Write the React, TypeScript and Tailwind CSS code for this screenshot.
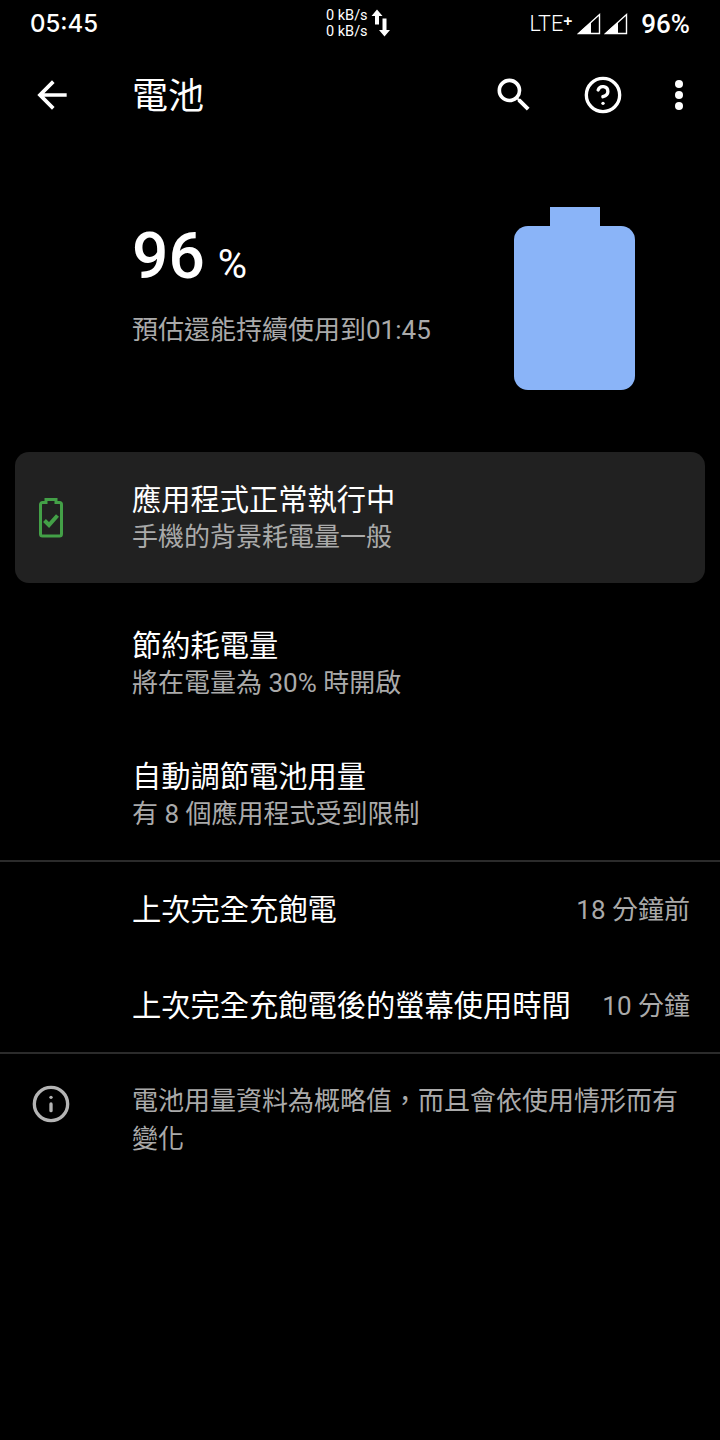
import { CircleHelp, Info } from 'lucide-react';

const cjk = "font-['Roboto','Noto_Sans_CJK_TC',sans-serif]";

function Signal() {
  return (
    <svg width="24" height="24" viewBox="0 0 24 24" className="text-white">
      <path d="M22.5 2.5V21.5H1.5Z" fill="none" stroke="currentColor" strokeWidth="1.4" />
      <path d="M13.5 11V21.5H1.5Z" fill="currentColor" stroke="currentColor" strokeWidth="1" />
    </svg>
  );
}

function StatusBar() {
  return (
    <div className="flex h-[48px] items-center pl-[30px] pr-[30px] text-white">
      <span className="w-[296px] text-[24px] font-medium font-['Inter','Roboto',sans-serif]">05:45</span>
      <div className="flex w-[100px] items-center">
        <div className="flex flex-col text-[14.5px] leading-[16px] font-['Roboto',sans-serif]">
          <span>0 kB/s</span>
          <span>0 kB/s</span>
        </div>
        <svg width="20" height="30" viewBox="0 0 20 30" className="ml-[3px]">
          <path d="M6 0.5L11.5 7H8V15.5H4V7H0.5Z" fill="white" />
          <path d="M13.5 27.5L8 21H11.5V9.5H15.5V21H19Z" fill="white" />
        </svg>
      </div>
      <div className="ml-auto flex items-center">
        <span className="text-[21.5px] font-['Roboto',sans-serif] font-light">LTE</span>
        <span className="mb-[6px] text-[16px] font-bold leading-none">+</span>
        <div className="ml-[5px] flex">
          <Signal />
          <span className="ml-[3px]"><Signal /></span>
        </div>
        <span className="ml-[13px] text-[26px] font-medium font-['Roboto',sans-serif]">96%</span>
      </div>
    </div>
  );
}

function Toolbar() {
  return (
    <div className="flex h-[94px] items-center text-white">
      <div className="flex w-[132px] pl-[30px]">
        <svg width="44" height="44" viewBox="0 0 24 24" fill="currentColor">
          <path d="M20 11H7.83l5.59-5.59L12 4l-8 8 8 8 1.41-1.41L7.83 13H20v-2z" />
        </svg>
      </div>
      <span className={`mt-[3px] text-[36px] leading-none ${cjk}`}>電池</span>
      <div className="ml-auto flex items-center pr-[37px]">
        <svg width="44" height="44" viewBox="0 0 24 24" fill="currentColor">
          <path d="M15.5 14h-.79l-.28-.27A6.471 6.471 0 0 0 16 9.5 6.5 6.5 0 1 0 9.5 16c1.61 0 3.09-.59 4.23-1.57l.27.28v.79l5 4.99L20.49 19l-4.99-5zm-6 0C7.01 14 5 11.99 5 9.5S7.01 5 9.5 5 14 7.01 14 9.5 11.99 14 9.5 14z" />
        </svg>
        <CircleHelp size={40} strokeWidth={2} className="ml-[47px]" />
        <div className="ml-[52px] flex flex-col gap-[3px]">
          <span className="size-[8px] rounded-full bg-white" />
          <span className="size-[8px] rounded-full bg-white" />
          <span className="size-[8px] rounded-full bg-white" />
        </div>
      </div>
    </div>
  );
}

function Hero() {
  return (
    <div className="flex h-[310px] pl-[132px] pr-[85px] pt-[65px]">
      <div className="flex-1 pt-[10px]">
        <div className="flex items-baseline text-white font-['Roboto',sans-serif]">
          <span className="text-[64px] font-medium leading-[80px]">96</span>
          <span className="ml-[13px] text-[40px] leading-none">%</span>
        </div>
        <p className={`mt-[16px] text-[26px] leading-[34px] text-[#aaaaaa] ${cjk}`}>預估還能持續使用到01:45</p>
      </div>
      <div className="flex flex-col items-center">
        <div className="h-[19px] w-[50px] bg-[#8ab4f8]" />
        <div className="h-[164px] w-[121px] rounded-[14px] bg-[#8ab4f8]" />
      </div>
    </div>
  );
}

function BatteryCheck() {
  return (
    <svg width="24" height="40" viewBox="0 0 24 40" fill="none" stroke="#43a047">
      <path d="M7 4.5V1.5H17V4.5H20.5A2 2 0 0 1 22.5 6.5V36A2 2 0 0 1 20.5 38H3.5A2 2 0 0 1 1.5 36V6.5A2 2 0 0 1 3.5 4.5Z" strokeWidth="3" />
      <path d="M5.5 22.5L10 27L18.5 17.5" strokeWidth="4" />
    </svg>
  );
}

function TextRow({ title, sub }: { title: string; sub: string }) {
  return (
    <div className={`flex h-[131px] flex-col justify-center pl-[132px] pt-[1.5px] ${cjk}`}>
      <span className="text-[29.25px] leading-[38px] text-white">{title}</span>
      <span className="text-[26px] leading-[36px] text-[#aaaaaa]">{sub}</span>
    </div>
  );
}

function StatRow({ label, value, height }: { label: string; value: string; height: string }) {
  return (
    <div className={`flex items-center justify-between pl-[132px] pr-[30px] ${height} ${cjk}`}>
      <span className="text-[29.25px] leading-[38px] text-white">{label}</span>
      <span className="text-[26px] leading-[36px] text-[#aaaaaa]">{value}</span>
    </div>
  );
}

export default function App() {
  return (
    <div className="h-[1440px] w-[720px] overflow-hidden bg-black">
      <StatusBar />
      <Toolbar />
      <Hero />
      <div className="mx-[15px] flex h-[131px] items-center rounded-[14px] bg-[#212121]">
        <div className="flex w-[117px] pl-[24px]">
          <BatteryCheck />
        </div>
        <div className={`flex flex-col pt-[1.5px] ${cjk}`}>
          <span className="text-[29.25px] leading-[38px] text-white">應用程式正常執行中</span>
          <span className="text-[26px] leading-[36px] text-[#aaaaaa]">手機的背景耗電量一般</span>
        </div>
      </div>
      <div className="mt-[15px]">
        <TextRow title="節約耗電量" sub="將在電量為 30% 時開啟" />
        <TextRow title="自動調節電池用量" sub="有 8 個應用程式受到限制" />
      </div>
      <div className="border-b-2 border-[#2b2b2b]" />
      <StatRow label="上次完全充飽電" value="18 分鐘前" height="h-[96px] pb-[1px]" />
      <StatRow label="上次完全充飽電後的螢幕使用時間" value="10 分鐘" height="h-[94px] pt-[1px]" />
      <div className="border-b-2 border-[#2b2b2b]" />
      <div className="flex pt-[28px]">
        <div className="flex w-[132px] pl-[31px]">
          <Info size={40} strokeWidth={2} className="mt-[2px] text-[#b4b4b4]" />
        </div>
        <p className={`w-[560px] text-[26px] leading-[38px] text-[#aaaaaa] ${cjk}`}>電池用量資料為概略值，而且會依使用情形而有變化</p>
      </div>
    </div>
  );
}
